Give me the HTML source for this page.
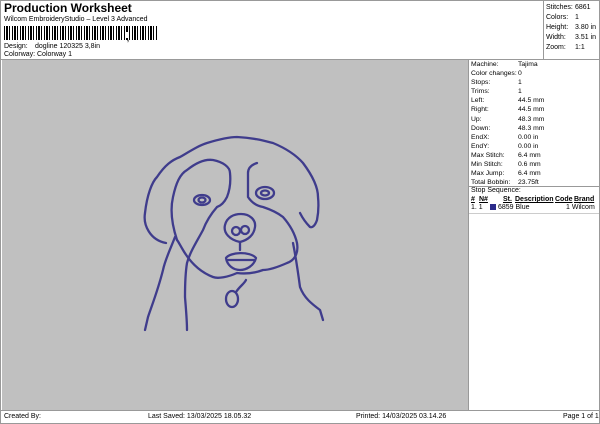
<!DOCTYPE html>
<html><head><style>
*{margin:0;padding:0;box-sizing:border-box}
body{width:600px;height:424px;background:#fff;font-family:"Liberation Sans",sans-serif;font-size:7px;color:#000;position:relative;overflow:hidden}
.a{position:absolute;white-space:nowrap}
.bc{position:absolute;left:4px;top:26px;width:154px;height:14px;background:repeating-linear-gradient(90deg,#000 0 1px,#fff 1px 2px,#000 2px 4px,#fff 4px 5px,#000 5px 6px,#fff 6px 8px)}
</style></head><body>
<div class="a" style="left:0;top:0;width:600px;height:424px;border:1px solid #999"></div>
<div class="a" style="left:4px;top:1px;font-size:12px;font-weight:bold">Production Worksheet</div>
<div class="a" style="left:4px;top:16px">Wilcom EmbroideryStudio – Level 3 Advanced</div>
<div class="bc"></div>
<div class="a" style="left:126px;top:32px;width:2px;height:6px;background:#fff"></div>
<div class="a" style="left:127px;top:36px;font-size:7px;font-weight:bold">,</div>
<div class="a" style="left:4px;top:43px">Design:</div><div class="a" style="left:35px;top:43px">dogline 120325 3,8in</div>
<div class="a" style="left:4px;top:51px">Colorway:</div><div class="a" style="left:37px;top:51px">Colorway 1</div>
<div class="a" style="left:543px;top:0;width:1px;height:59px;background:#999"></div>
<div class="a" style="left:546px;top:3px;line-height:10px">Stitches:<br>Colors:<br>Height:<br>Width:<br>Zoom:</div>
<div class="a" style="left:575px;top:3px;line-height:10px">6861<br>1<br>3.80 in<br>3.51 in<br>1:1</div>
<div class="a" style="left:1px;top:59px;width:598px;height:1px;background:#999"></div>
<div class="a" style="left:2px;top:60px;width:466px;height:350px;background:#c0c0c0"></div>
<div class="a" style="left:468px;top:60px;width:1px;height:350px;background:#999"></div>
<div class="a" style="left:471px;top:60px;line-height:9.1px;font-size:6.8px">Machine:<br>Color changes:<br>Stops:<br>Trims:<br>Left:<br>Right:<br>Up:<br>Down:<br>EndX:<br>EndY:<br>Max Stitch:<br>Min Stitch:<br>Max Jump:<br>Total Bobbin:</div>
<div class="a" style="left:518px;top:60px;line-height:9.1px;font-size:6.8px">Tajima<br>0<br>1<br>1<br>44.5 mm<br>44.5 mm<br>48.3 mm<br>48.3 mm<br>0.00 in<br>0.00 in<br>6.4 mm<br>0.6 mm<br>6.4 mm<br>23.75ft</div>
<div class="a" style="left:469px;top:186px;width:130px;height:1px;background:#999"></div>
<div class="a" style="left:471px;top:187px">Stop Sequence:</div>
<div class="a" style="left:471px;top:196px;font-weight:bold;text-decoration:underline">#</div>
<div class="a" style="left:479px;top:196px;font-weight:bold;text-decoration:underline">N#</div>
<div class="a" style="left:503px;top:196px;font-weight:bold;text-decoration:underline">St.</div>
<div class="a" style="left:515px;top:196px;font-weight:bold;text-decoration:underline">Description</div>
<div class="a" style="left:555px;top:196px;font-weight:bold;text-decoration:underline">Code</div>
<div class="a" style="left:574px;top:196px;font-weight:bold;text-decoration:underline">Brand</div>
<div class="a" style="left:471px;top:204px">1. 1</div>
<div class="a" style="left:490px;top:204px;width:6px;height:6px;background:#2b2a8a"></div>
<div class="a" style="left:498px;top:204px">6859 Blue</div>
<div class="a" style="left:566px;top:204px">1 Wilcom</div>
<div class="a" style="left:469px;top:213px;width:130px;height:1px;background:#ccc"></div>
<div class="a" style="left:1px;top:410px;width:598px;height:1px;background:#999"></div>
<div class="a" style="left:4px;top:413px">Created By:</div>
<div class="a" style="left:148px;top:413px">Last Saved: 13/03/2025 18.05.32</div>
<div class="a" style="left:356px;top:413px">Printed: 14/03/2025 03.14.26</div>
<div class="a" style="left:563px;top:413px">Page 1 of 1</div>
<svg class="a" style="left:0;top:0" width="600" height="424" fill="none" stroke="#3f3c8c" stroke-width="2.3" stroke-linecap="round" stroke-linejoin="round">
<path d="M166 243 C150 240 143 225 145 213 C147 195 152 182 157 177 C165 165 172 160 180 157 C192 150 200 145 207 143 C220 139 230 137 237 137 C255 138 265 141 273 143 C285 148 296 155 303 163 C312 175 318 187 318 197 C319 207 318 215 317 220 C315 226 312 228 310 227 C305 222 302 217 300 213"/>
<path d="M175 237 C170 250 165 260 163 270 C158 290 152 305 148 317 L145 330"/>
<path d="M177 240 C172 225 170 210 173 197 C176 183 180 174 187 170 C197 162 206 159 213 160 C223 162 230 167 230 173 C231 183 229 192 227 197 C224 203 220 206 217 207 C210 215 206 222 203 230 C196 243 190 252 187 263 C185 275 185 287 185 297 C186 310 187 320 187 330"/>
<path d="M257 163 C251 165 248 168 248 173 L248 197 C252 203 257 206 263 207 C272 210 278 213 283 217 C290 225 295 234 297 243 C299 255 293 261 287 263 C278 267 270 270 263 270 C255 273 245 274 237 273 C228 277 218 279 213 277 C200 272 190 262 183 250 C180 245 178 241 177 240"/>
<path d="M293 243 C296 258 298 272 300 287 C304 298 312 304 320 310 L323 320"/>
<ellipse cx="202" cy="200" rx="8" ry="5"/><ellipse cx="202" cy="200" rx="3.5" ry="2.5"/>
<ellipse cx="265" cy="193" rx="9" ry="6"/><ellipse cx="265" cy="193" rx="4" ry="2.5"/>
<path d="M240 242 C230 240 223 233 225 225 C227 217 234 214 241 214 C250 214 256 220 255 227 C254 235 248 240 240 242 Z"/>
<circle cx="236" cy="231" r="4"/><circle cx="245" cy="230" r="4"/>
<path d="M240 242 L240 250"/>
<path d="M226 258 C230 252 250 251 256 258 C254 266 246 270 240 270 C233 270 227 265 226 258 Z"/><path d="M228 260 L254 260"/>
<ellipse cx="232" cy="299" rx="6" ry="8"/><path d="M236 292 C240 286 244 284 246 280"/>
</svg>
</body></html>
